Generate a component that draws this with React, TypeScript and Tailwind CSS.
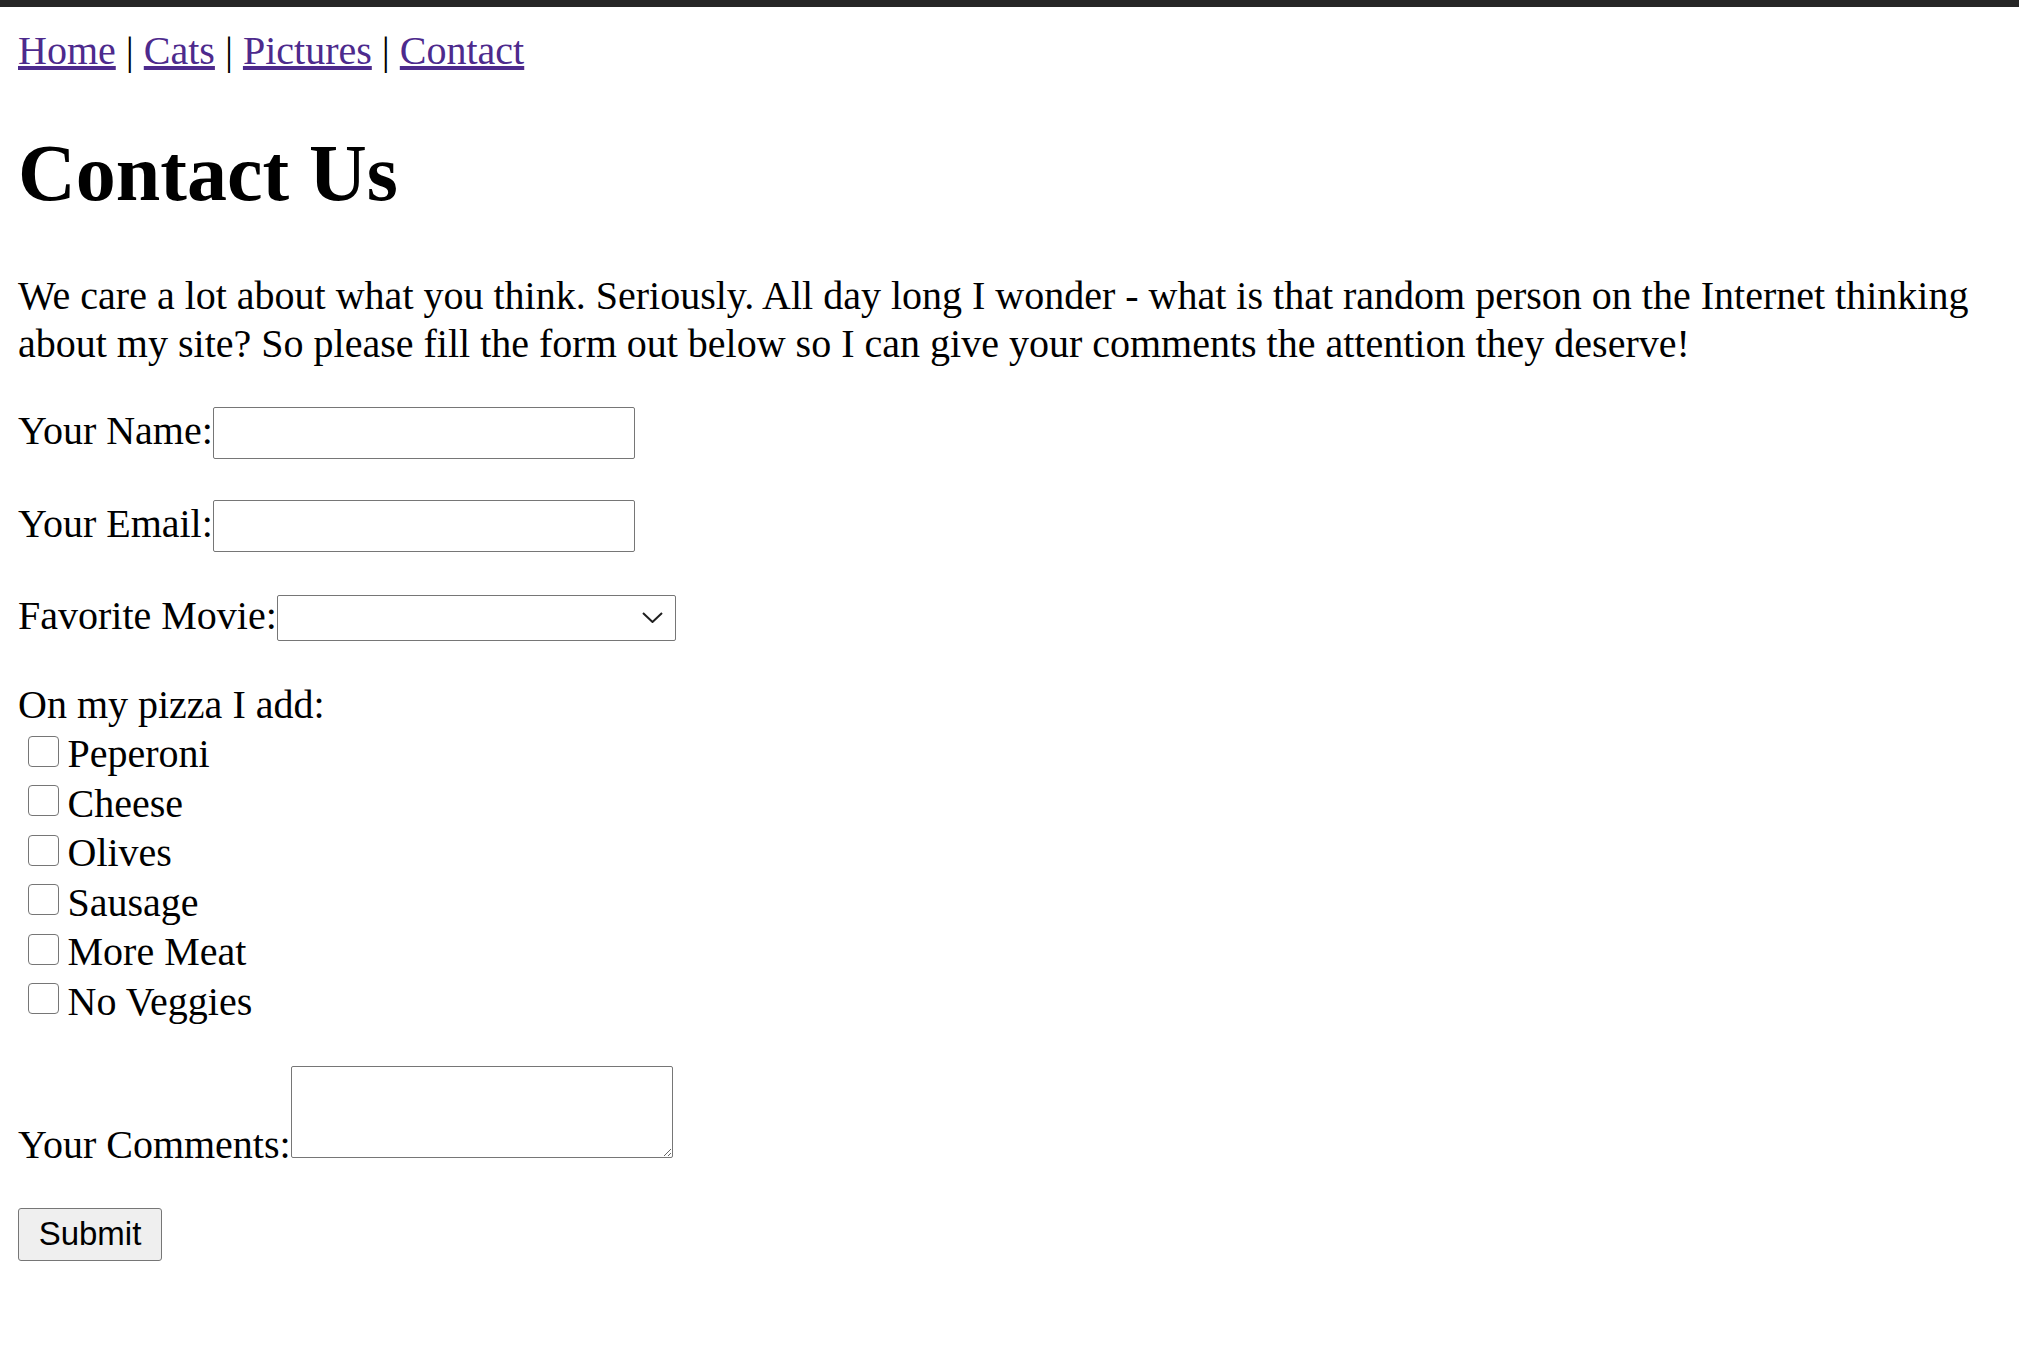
import React from "react";

const toppings = ["Peperoni", "Cheese", "Olives", "Sausage", "More Meat", "No Veggies"];

export default function App() {
  return (
    <div className="min-h-screen bg-white text-black font-['Liberation_Serif','Times_New_Roman',serif]">
      <div className="h-[7px] bg-[#262626]" />
      <div className="px-[18px]">
        <nav className="pt-[21px] text-[40px] leading-[46px]">
          <a href="#" className="text-[#4d2a8d] underline">Home</a>
          {" | "}
          <a href="#" className="text-[#4d2a8d] underline">Cats</a>
          {" | "}
          <a href="#" className="text-[#4d2a8d] underline">Pictures</a>
          {" | "}
          <a href="#" className="text-[#4d2a8d] underline">Contact</a>
        </nav>

        <h1 className="mt-[53px] text-[80px] leading-[92px] font-bold">Contact Us</h1>

        <p className="mt-[53px] text-[40px] leading-[47.5px]">
          We care a lot about what you think. Seriously. All day long I wonder - what is that random person on the
          Internet thinking about my site? So please fill the form out below so I can give your comments the attention
          they deserve!
        </p>

        <form className="mt-[39.5px] text-[40px] leading-[46px]" onSubmit={(e) => e.preventDefault()}>
          <div className="flex items-start">
            <label className="mt-[1.5px] whitespace-nowrap">Your Name:</label>
            <input
              type="text"
              className="w-[422px] h-[52px] border border-[#767676] rounded-[2px] bg-white outline-none"
            />
          </div>

          <div className="mt-[41px] flex items-start">
            <label className="mt-[1.2px] whitespace-nowrap">Your Email:</label>
            <input
              type="email"
              className="w-[422px] h-[52px] border border-[#767676] rounded-[2px] bg-white outline-none"
            />
          </div>

          <div className="mt-[40.5px] flex items-start">
            <label className="mt-[0.5px] whitespace-nowrap">Favorite Movie:</label>
            <div className="relative mt-[2.5px] w-[399px] h-[46px]">
              <select className="appearance-none w-full h-full border border-[#767676] rounded-[2px] bg-white outline-none" />
              <svg
                className="pointer-events-none absolute left-[365px] top-[17.5px]"
                width="21"
                height="11"
                viewBox="0 0 21 11"
                fill="none"
              >
                <path d="M1 1 L10.5 10 L20 1" stroke="#1f1f1f" strokeWidth="2" strokeLinejoin="miter" />
              </svg>
            </div>
          </div>

          <div className="mt-[41px]">On my pizza I add:</div>

          <div className="mt-[3.5px] flex flex-col">
            {toppings.map((t) => (
              <label key={t} className="flex items-start h-[49.5px]">
                <input
                  type="checkbox"
                  className="appearance-none mt-[4.5px] ml-[10px] mr-[8.5px] w-[31px] h-[31px] border border-[#767676] rounded-[4px] bg-white shrink-0"
                />
                <span>{t}</span>
              </label>
            ))}
          </div>

          <div className="mt-[38px] flex items-start">
            <label className="mt-[56px] whitespace-nowrap">Your Comments:</label>
            <textarea className="w-[382px] h-[92px] border border-[#767676] rounded-[2px] bg-white outline-none resize" />
          </div>

          <button
            type="submit"
            className="mt-[40px] w-[144px] h-[53px] flex items-center justify-center pb-[3px] bg-[#efefef] border border-[#767676] rounded-[3px] font-['Liberation_Sans','Arial',sans-serif] text-[33px] leading-none text-black"
          >
            Submit
          </button>
        </form>
      </div>
    </div>
  );
}
